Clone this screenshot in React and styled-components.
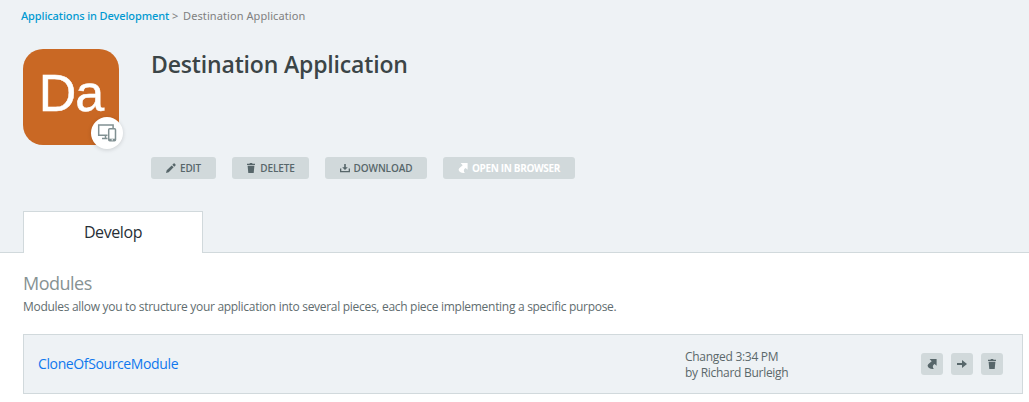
import React from "react";
import styled, { createGlobalStyle } from "styled-components";

const Global = createGlobalStyle`
  * { box-sizing: border-box; }
  body { margin: 0; background: #fff; color: #5b686a; font-family: "Open Sans", "Noto Sans", sans-serif; overflow: hidden; }
  h1, h2, p { margin: 0; font-weight: 400; }
`;
const Page = styled.div`
  height: 402px;
  overflow: hidden;
  white-space: nowrap;
`;
const Header = styled.header`
  height: 253px;
  display: flex;
  flex-direction: column;
  padding-left: 23px;
  background: #eef2f5;
  border-bottom: 1px solid #d1d9dc;
`;
const Breadcrumb = styled.nav`
  height: 49px;
  margin-left: -2px;
  padding-top: 8px;
  font: 11px/16px "Noto Sans", sans-serif;
  color: #808080;
  display: flex;
`;
const Crumb = styled.span`
  color: ${(p) => (p.$link ? "#0099d1" : "#808080")};
  font-weight: ${(p) => (p.$link ? 500 : 400)};
  letter-spacing: ${(p) => (p.$link ? "-0.1px" : "0.08px")};
`;
const Separator = styled.span`
  width: 14px;
  padding-left: 3px;
  font-size: 11px;
`;
const Summary = styled.div`
  display: flex;
  gap: 32px;
  height: 162px;
`;
const AppIcon = styled.div`
  position: relative;
  width: 96px;
  height: 96px;
  border-radius: 20px;
  background: #c96824;
  color: #fff;
  font: 52px/88px "Liberation Sans", sans-serif;
  letter-spacing: -1px;
  -webkit-text-stroke: 0.5px #fff;
  text-align: center;
`;
const DeviceBadge = styled.span`
  position: absolute;
  left: 68px;
  top: 68px;
  width: 32px;
  height: 32px;
  border-radius: 50%;
  background: #fff;
  box-shadow: 0 1px 4px rgba(0, 0, 0, 0.15);
  display: flex;
  align-items: center;
  justify-content: center;
`;
const Details = styled.div`
  display: flex;
  flex-direction: column;
`;
const Title = styled.h1`
  height: 108px;
  font-size: 23px;
  line-height: 31px;
  && { font-weight: 600; }
  letter-spacing: -0.16px;
  color: #3b4547;
`;
const Actions = styled.div`
  display: flex;
  gap: 16px;
`;
const Button = styled.button`
  width: ${(p) => p.$width}px;
  height: 22px;
  padding: 0;
  border: 0;
  border-radius: 3px;
  background: #d1d9db;
  color: ${(p) => (p.disabled ? "#fff" : "#57666a")};
  display: flex;
  align-items: center;
  justify-content: center;
  gap: 4px;
  font: ${(p) => (p.disabled ? 700 : 600)} 10px/22px "Open Sans", sans-serif;
  letter-spacing: ${(p) => (p.disabled ? "-0.35px" : "-0.12px")};
`;
const Tab = styled.div`
  width: 180px;
  height: 42px;
  background: #fff;
  border: 1px solid #d1d9dc;
  border-bottom: 0;
  margin-bottom: -1px;
  font-size: 16px;
  line-height: 41px;
  letter-spacing: -0.4px;
  text-align: center;
  color: #272f36;
`;
const Modules = styled.main`
  padding: 18px 6px 0 23px;
`;
const SectionTitle = styled.h2`
  font-size: 18px;
  line-height: 24px;
  letter-spacing: -0.5px;
  color: #879293;
`;
const Description = styled.p`
  height: 39px;
  padding-top: 3px;
  font-size: 12px;
  line-height: 18px;
  letter-spacing: -0.295px;
  color: #5f6d6f;
`;
const ModuleRow = styled.section`
  height: 60px;
  border: 1px solid #d1d9dc;
  background: #eef2f5;
  display: grid;
  grid-template-columns: 647px 1fr auto;
  align-items: center;
  padding: 0 19px 0 14px;
`;
const ModuleName = styled.a`
  color: #0f78ee;
  font-size: 14px;
  line-height: 18px;
  padding-bottom: 1px;
  letter-spacing: -0.38px;
`;
const Changed = styled.div`
  padding-top: 2px;
  font-size: 12px;
  line-height: 16px;
  letter-spacing: -0.28px;
`;
const RowActions = styled.div`
  display: flex;
  gap: 8px;
`;

const Glyph = ({ size = 10, children }) => (
  <svg width={size} height={size} viewBox="0 0 10 10" fill="currentColor">{children}</svg>
);
const Pencil = () => <Glyph><path d="M0 10l.7-2.7 5-4.9L7.6 4.3 2.7 9.2zM6.3 1.8L7.6.5Q8.1 0 8.6.5l.9.9q.5.5 0 1L8.2 3.7z" /></Glyph>;
const Trash = () => <Glyph><path d="M1 .8h2.7V0h2.6v.8H9V2H1zM1.6 2.8h6.8L7.7 10H2.3z" /></Glyph>;
const Download = () => <Glyph><path d="M4.2 1h1.6v3.2h2L5 7 2.2 4.2h2zM0 5.4h1.3v2.5h7.4V5.4H10v3.8H0z" /></Glyph>;
const Open = () => <Glyph><path d="M2.6 0h7v6.7L7.6 5C5.7 6.2 5.2 7.8 6.8 10 3.3 10.2.2 8.5.7 6.2 1 4.6 3.4 3.6 4.7 2.2z" /></Glyph>;
const Arrow = () => <Glyph><path d="M0 4h5V1.1L10 5 5 8.9V6H0z" /></Glyph>;
const Devices = () => (
  <svg width="20" height="20" viewBox="0 0 20 20" fill="none" stroke="#809092" strokeWidth="1.5">
    <path d="M10.5 12.2H1.7V1.9h14.4v3" />
    <path d="M8.5 12.7v2.8M5 15.5h5.5" />
    <rect x="11.7" y="5.7" width="6.8" height="12" rx="1" />
    <path d="M12 16.7h6.5" strokeWidth="2" />
    <path d="M14.7 16.8h1" stroke="#fff" />
  </svg>
);

export default function App() {
  return (
    <Page>
      <Global />
      <Header>
        <Breadcrumb>
          <Crumb $link>Applications in Development</Crumb>
          <Separator>&gt;</Separator>
          <Crumb>Destination Application</Crumb>
        </Breadcrumb>
        <Summary>
          <AppIcon>Da<DeviceBadge><Devices /></DeviceBadge></AppIcon>
          <Details>
            <Title>Destination Application</Title>
            <Actions>
              <Button $width={65}><Pencil />EDIT</Button>
              <Button $width={77}><Trash />DELETE</Button>
              <Button $width={102}><Download />DOWNLOAD</Button>
              <Button $width={132} disabled><Open />OPEN IN BROWSER</Button>
            </Actions>
          </Details>
        </Summary>
        <Tab>Develop</Tab>
      </Header>
      <Modules>
        <SectionTitle>Modules</SectionTitle>
        <Description>Modules allow you to structure your application into several pieces, each piece implementing a specific purpose.</Description>
        <ModuleRow>
          <ModuleName>CloneOfSourceModule</ModuleName>
          <Changed>Changed 3:34 PM<br />by Richard Burleigh</Changed>
          <RowActions>
            <Button $width={22}><Open /></Button>
            <Button $width={22}><Arrow /></Button>
            <Button $width={22}><Trash /></Button>
          </RowActions>
        </ModuleRow>
      </Modules>
    </Page>
  );
}
